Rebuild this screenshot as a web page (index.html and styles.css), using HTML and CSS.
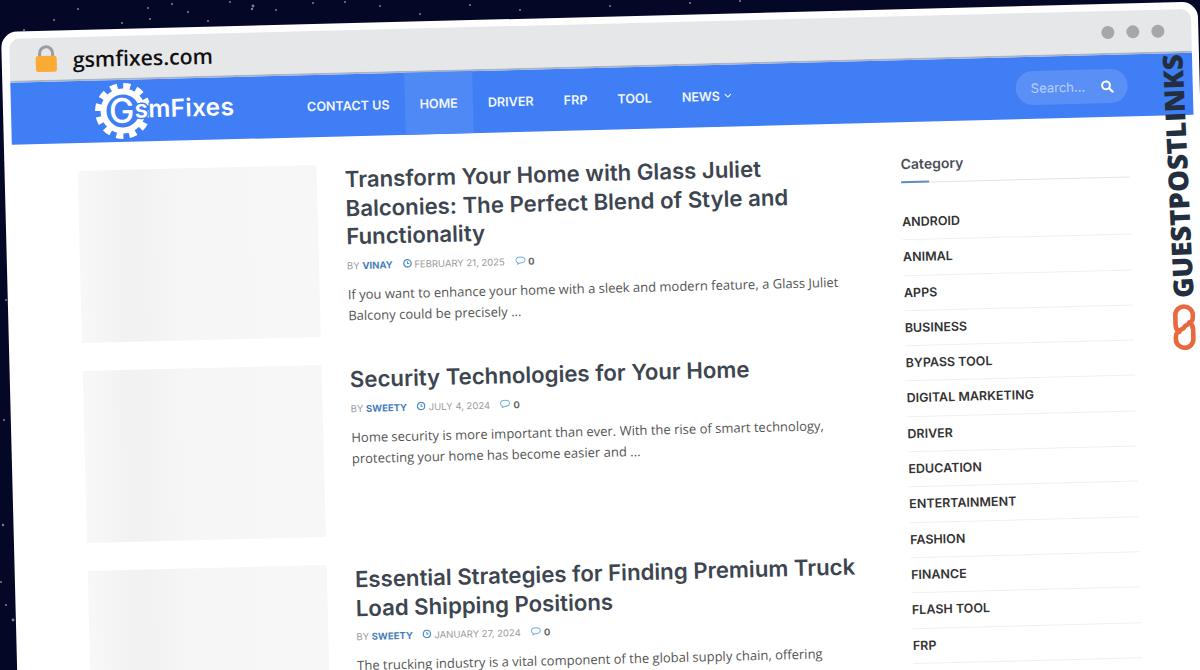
FILE: index.html
```html
<!DOCTYPE html>
<html lang="en">
<head>
<meta charset="UTF-8" />
<title>gsmfixes.com</title>
<link rel="stylesheet" href="styles.css">
</head>
<body>

<svg class="stars" width="1200" height="670" viewBox="0 0 1200 670">
    <g fill="#7b809c">
        <circle cx="78" cy="9" r="1"/><circle cx="172" cy="4" r="1"/><circle cx="148" cy="8" r="1"/>
        <circle cx="252" cy="9" r="1.2"/><circle cx="230" cy="2" r="1"/><circle cx="253" cy="6" r="1.4"/>
        <circle cx="276" cy="10" r="1"/><circle cx="313" cy="3" r="1"/><circle cx="345" cy="2" r="1"/>
        <circle cx="188" cy="12" r="1"/><circle cx="54" cy="20" r="1"/><circle cx="122" cy="23" r="1"/>
        <circle cx="150" cy="19" r="1"/><circle cx="208" cy="21" r="1"/><circle cx="380" cy="6" r="1"/>
        <circle cx="420" cy="14" r="1"/><circle cx="470" cy="5" r="1"/><circle cx="520" cy="10" r="1"/>
        <circle cx="610" cy="6" r="1"/><circle cx="690" cy="3" r="1"/><circle cx="740" cy="1" r="1"/>
        <circle cx="24" cy="30" r="1"/><circle cx="3" cy="70" r="1"/><circle cx="5" cy="160" r="1"/>
        <circle cx="3" cy="525" r="1.2"/><circle cx="1" cy="582" r="1"/><circle cx="6" cy="605" r="1"/>
        <circle cx="13" cy="620" r="1.4"/><circle cx="6" cy="300" r="1"/><circle cx="4" cy="420" r="1"/>
    </g>
</svg>

<div class="window">
    <div class="toolbar">
        <svg class="lock" width="23" height="28" viewBox="0 0 23 28">
            <path d="M5 14V8.5a6.5 6.5 0 0 1 13 0V14" fill="none" stroke="#9a9da3" stroke-width="3"/>
            <rect x="1" y="11" width="21" height="16" rx="2.5" fill="#fbab34"/>
        </svg>
        <span class="url">gsmfixes.com</span>
        <div class="dots"><i></i><i></i><i></i></div>
    </div>

    <header class="site-head">
        <a class="logo">
            <svg class="gear" width="58" height="58" viewBox="0 0 58 58">
                <circle cx="29" cy="29" r="25" fill="none" stroke="#fff" stroke-width="6" stroke-dasharray="7.1 6"/>
                <circle cx="29" cy="29" r="19.500" fill="none" stroke="#fff" stroke-width="6"/>
            </svg>
            <span class="logo-text"><b>G</b>smFixes</span>
        </a>
        <nav class="menu">
            <a>CONTACT US</a>
            <a class="active">HOME</a>
            <a>DRIVER</a>
            <a>FRP</a>
            <a>TOOL</a>
            <a>NEWS
                <svg width="8" height="6" viewBox="0 0 8 6"><path d="M1 1.5l3 3 3-3" fill="none" stroke="#fff" stroke-width="1"/></svg>
            </a>
        </nav>
        <div class="search">
            <span>Search...</span>
            <svg width="13" height="13" viewBox="0 0 13 13"><circle cx="5.3" cy="5.3" r="3.9" fill="none" stroke="#fff" stroke-width="2"/><path d="M8.3 8.3l3.6 3.6" stroke="#fff" stroke-width="2.2" stroke-linecap="round"/></svg>
        </div>
    </header>

    <div class="page">
        <main class="posts">
            <article class="post">
                <div class="thumb"></div>
                <div class="post-body">
                    <h2>Transform Your Home with Glass Juliet Balconies: The Perfect Blend of Style and Functionality</h2>
                    <div class="meta">
                        <span>BY <a>VINAY</a></span>
                        <span class="date"><svg width="9" height="9" viewBox="0 0 9 9"><circle cx="4.5" cy="4.5" r="3.7" fill="none" stroke="#4a90c8" stroke-width="1.3"/><path d="M4.5 2.5v2.2h1.8" fill="none" stroke="#4a90c8"/></svg> FEBRUARY 21, 2025</span>
                        <span class="comments"><svg width="11" height="9" viewBox="0 0 11 9"><path d="M5.5 1C2.9 1 1 2.3 1 4s1 2.4 2 2.8L2.600 8.200 4.800 7C8 7.200 10 5.800 10 4S8.100 1 5.500 1z" fill="none" stroke="#6fb2dc"/></svg> 0</span>
                    </div>
                    <p>If you want to enhance your home with a sleek and modern feature, a Glass Juliet Balcony could be precisely ...</p>
                </div>
            </article>
            <article class="post">
                <div class="thumb"></div>
                <div class="post-body">
                    <h2>Security Technologies for Your Home</h2>
                    <div class="meta">
                        <span>BY <a>SWEETY</a></span>
                        <span class="date"><svg width="9" height="9" viewBox="0 0 9 9"><circle cx="4.5" cy="4.5" r="3.7" fill="none" stroke="#4a90c8" stroke-width="1.3"/><path d="M4.5 2.5v2.2h1.8" fill="none" stroke="#4a90c8"/></svg> JULY 4, 2024</span>
                        <span class="comments"><svg width="11" height="9" viewBox="0 0 11 9"><path d="M5.5 1C2.9 1 1 2.3 1 4s1 2.4 2 2.8L2.600 8.200 4.800 7C8 7.200 10 5.800 10 4S8.100 1 5.500 1z" fill="none" stroke="#6fb2dc"/></svg> 0</span>
                    </div>
                    <p>Home security is more important than ever. With the rise of smart technology, protecting your home has become easier and ...</p>
                </div>
            </article>
            <article class="post">
                <div class="thumb"></div>
                <div class="post-body">
                    <h2>Essential Strategies for Finding Premium Truck Load Shipping Positions</h2>
                    <div class="meta">
                        <span>BY <a>SWEETY</a></span>
                        <span class="date"><svg width="9" height="9" viewBox="0 0 9 9"><circle cx="4.5" cy="4.5" r="3.7" fill="none" stroke="#4a90c8" stroke-width="1.3"/><path d="M4.5 2.5v2.2h1.8" fill="none" stroke="#4a90c8"/></svg> JANUARY 27, 2024</span>
                        <span class="comments"><svg width="11" height="9" viewBox="0 0 11 9"><path d="M5.5 1C2.9 1 1 2.3 1 4s1 2.4 2 2.8L2.600 8.200 4.800 7C8 7.200 10 5.800 10 4S8.100 1 5.500 1z" fill="none" stroke="#6fb2dc"/></svg> 0</span>
                    </div>
                    <p>The trucking industry is a vital component of the global supply chain, offering</p>
                </div>
            </article>
        </main>

        <aside class="sidebar">
            <h3>Category</h3>
            <ul class="cats">
                <li>ANDROID</li>
                <li>ANIMAL</li>
                <li>APPS</li>
                <li>BUSINESS</li>
                <li>BYPASS TOOL</li>
                <li>DIGITAL MARKETING</li>
                <li>DRIVER</li>
                <li>EDUCATION</li>
                <li>ENTERTAINMENT</li>
                <li>FASHION</li>
                <li>FINANCE</li>
                <li>FLASH TOOL</li>
                <li>FRP</li>
            </ul>
        </aside>
    </div>

    <!-- badge that sits over the window -->
    <div class="badge">
        <span class="badge-text">GUESTPOSTLINKS</span>
        <svg class="badge-icon" width="23" height="46" viewBox="0 0 25 50">
            <g fill="none" stroke="#e8693f" stroke-width="5" stroke-linecap="round">
                <path d="M7 30C4 28 3 25 3 22V12a9.500 9.500 0 0 1 19 0v3c0 5-5 7-9 9"/>
                <path d="M18 20c3 2 4 5 4 8v10a9.500 9.500 0 0 1-19 0v-3c0-5 5-7 9-9"/>
            </g>
        </svg>
    </div>
</div>

</body>
</html>
```

FILE: styles.css
```css
html, body {
    margin: 0;
    height: 670px;
    overflow: hidden;
}

body {
    background: #040725;
    padding: 32px 0 0 1px;
    box-sizing: border-box;
    font-family: "Inter", "Liberation Sans", sans-serif;
}

.stars {
    position: absolute;
    left: 0;
    top: 0;
}

.window {
    position: relative;
    width: 1197px;
    height: 720px;
    box-sizing: border-box;
    background: #fff;
    border-radius: 16px;
    padding: 7px 7px 0 8px;
    transform: rotate(-1.45deg);
    transform-origin: 0 0;
}

.toolbar {
    height: 44px;
    box-sizing: border-box;
    display: flex;
    align-items: center;
    background: #e6e7e9;
    border-radius: 10px 10px 0 0;
    border-bottom: 2px solid #aab4c4;
    padding: 0 27px 0 25px;
}

.url {
    margin-left: 15px;
    font-family: "Open Sans", sans-serif;
    font-size: 21.3px;
    font-weight: 600;
    color: #111;
}

.dots {
    margin-left: auto;
    display: flex;
    gap: 12px;
}

.dots i {
    width: 13px;
    height: 13px;
    border-radius: 50%;
    background: #a6a7a9;
}

.site-head {
    height: 62px;
    display: flex;
    align-items: center;
    background: #3f7ef5;
    padding: 0 65px 0 83px;
}

.logo {
    width: 198px;
    display: flex;
    align-items: center;
}

/* blue edge round the letters, they run over the gear */
.logo-text {
    margin-left: -43px;
    font-size: 24.5px;
    font-weight: 600;
    letter-spacing: 0.3px;
    color: #fff;
    line-height: 1;
    -webkit-text-stroke: 3px #3f7ef5;
    paint-order: stroke fill;
}

.logo-text b {
    font-size: 34px;
    font-weight: 500;
    letter-spacing: 0;
    vertical-align: -5px;
}

.menu {
    display: flex;
    height: 100%;
}

.menu a {
    display: flex;
    align-items: center;
    gap: 4px;
    padding: 0 15px;
    font-size: 12.6px;
    font-weight: 600;
    color: #f2f6ff;
}

.menu a.active {
    background: #4f89f6;
}

.search {
    margin-left: auto;
    width: 112px;
    height: 34px;
    box-sizing: border-box;
    display: flex;
    align-items: center;
    justify-content: space-between;
    padding: 0 14px 0 15px;
    border-radius: 17px;
    background: #5a90f6;
    font-size: 13px;
    color: #b9d0fb;
}

.page {
    display: flex;
    padding: 28px 0 0 65px;
}

.posts {
    width: 823px;
}

.post {
    display: flex;
    gap: 28px;
    height: 200px;
}

.thumb {
    flex: none;
    width: 239px;
    height: 172px;
    background: linear-gradient(90deg, #f8f8f8 0, #f2f2f2 18%, #f2f2f2 26%, #f6f6f6 42%, #f7f7f7 100%);
}

.post-body {
    width: 520px;
}

.post h2 {
    margin: 0;
    padding-top: 1px;
    font-size: 22.2px;
    line-height: 28.6px;
    font-weight: 600;
    color: #3d4650;
}

.meta {
    display: flex;
    gap: 10px;
    margin-top: 9px;
    font-size: 9.5px;
    color: #9a9a9a;
}

.meta a {
    font-weight: 700;
    color: #3f7ebb;
}

.comments {
    font-weight: 700;
    color: #666;
}

.post p {
    margin: 13px 0 0;
    font-family: "Open Sans", sans-serif;
    font-size: 13px;
    line-height: 21px;
    color: #555;
}

.sidebar {
    width: 229px;
}

.sidebar h3 {
    position: relative;
    margin: 0;
    padding: 5px 0 9px;
    font-size: 14px;
    font-weight: 600;
    line-height: 18px;
    color: #4a4f55;
    border-bottom: 1px solid #e4e4e4;
}

/* short blue bit on the heading rule */
.sidebar h3::after {
    content: "";
    position: absolute;
    left: 0;
    bottom: -1px;
    width: 28px;
    height: 2px;
    background: #5b8fc0;
}

.cats {
    list-style: none;
    margin: 22px 0 0;
    padding: 0;
}

.cats li {
    padding: 10px 2px 10px 0;
    font-size: 12.5px;
    font-weight: 600;
    line-height: 14.3px;
    color: #333;
    border-bottom: 1px solid #f0f0f0;
}

.badge {
    position: absolute;
    left: 1156px;
    top: 52px;
    display: flex;
    flex-direction: column;
    align-items: center;
    gap: 6px;
}

.badge-text {
    writing-mode: vertical-rl;
    transform: rotate(178.8deg);
    font-family: "Open Sans", sans-serif;
    font-size: 27.6px;
    font-weight: 800;
    line-height: 26px;
    color: #232f3e;
}

.badge-icon {
    margin-left: 8px;
}
```
